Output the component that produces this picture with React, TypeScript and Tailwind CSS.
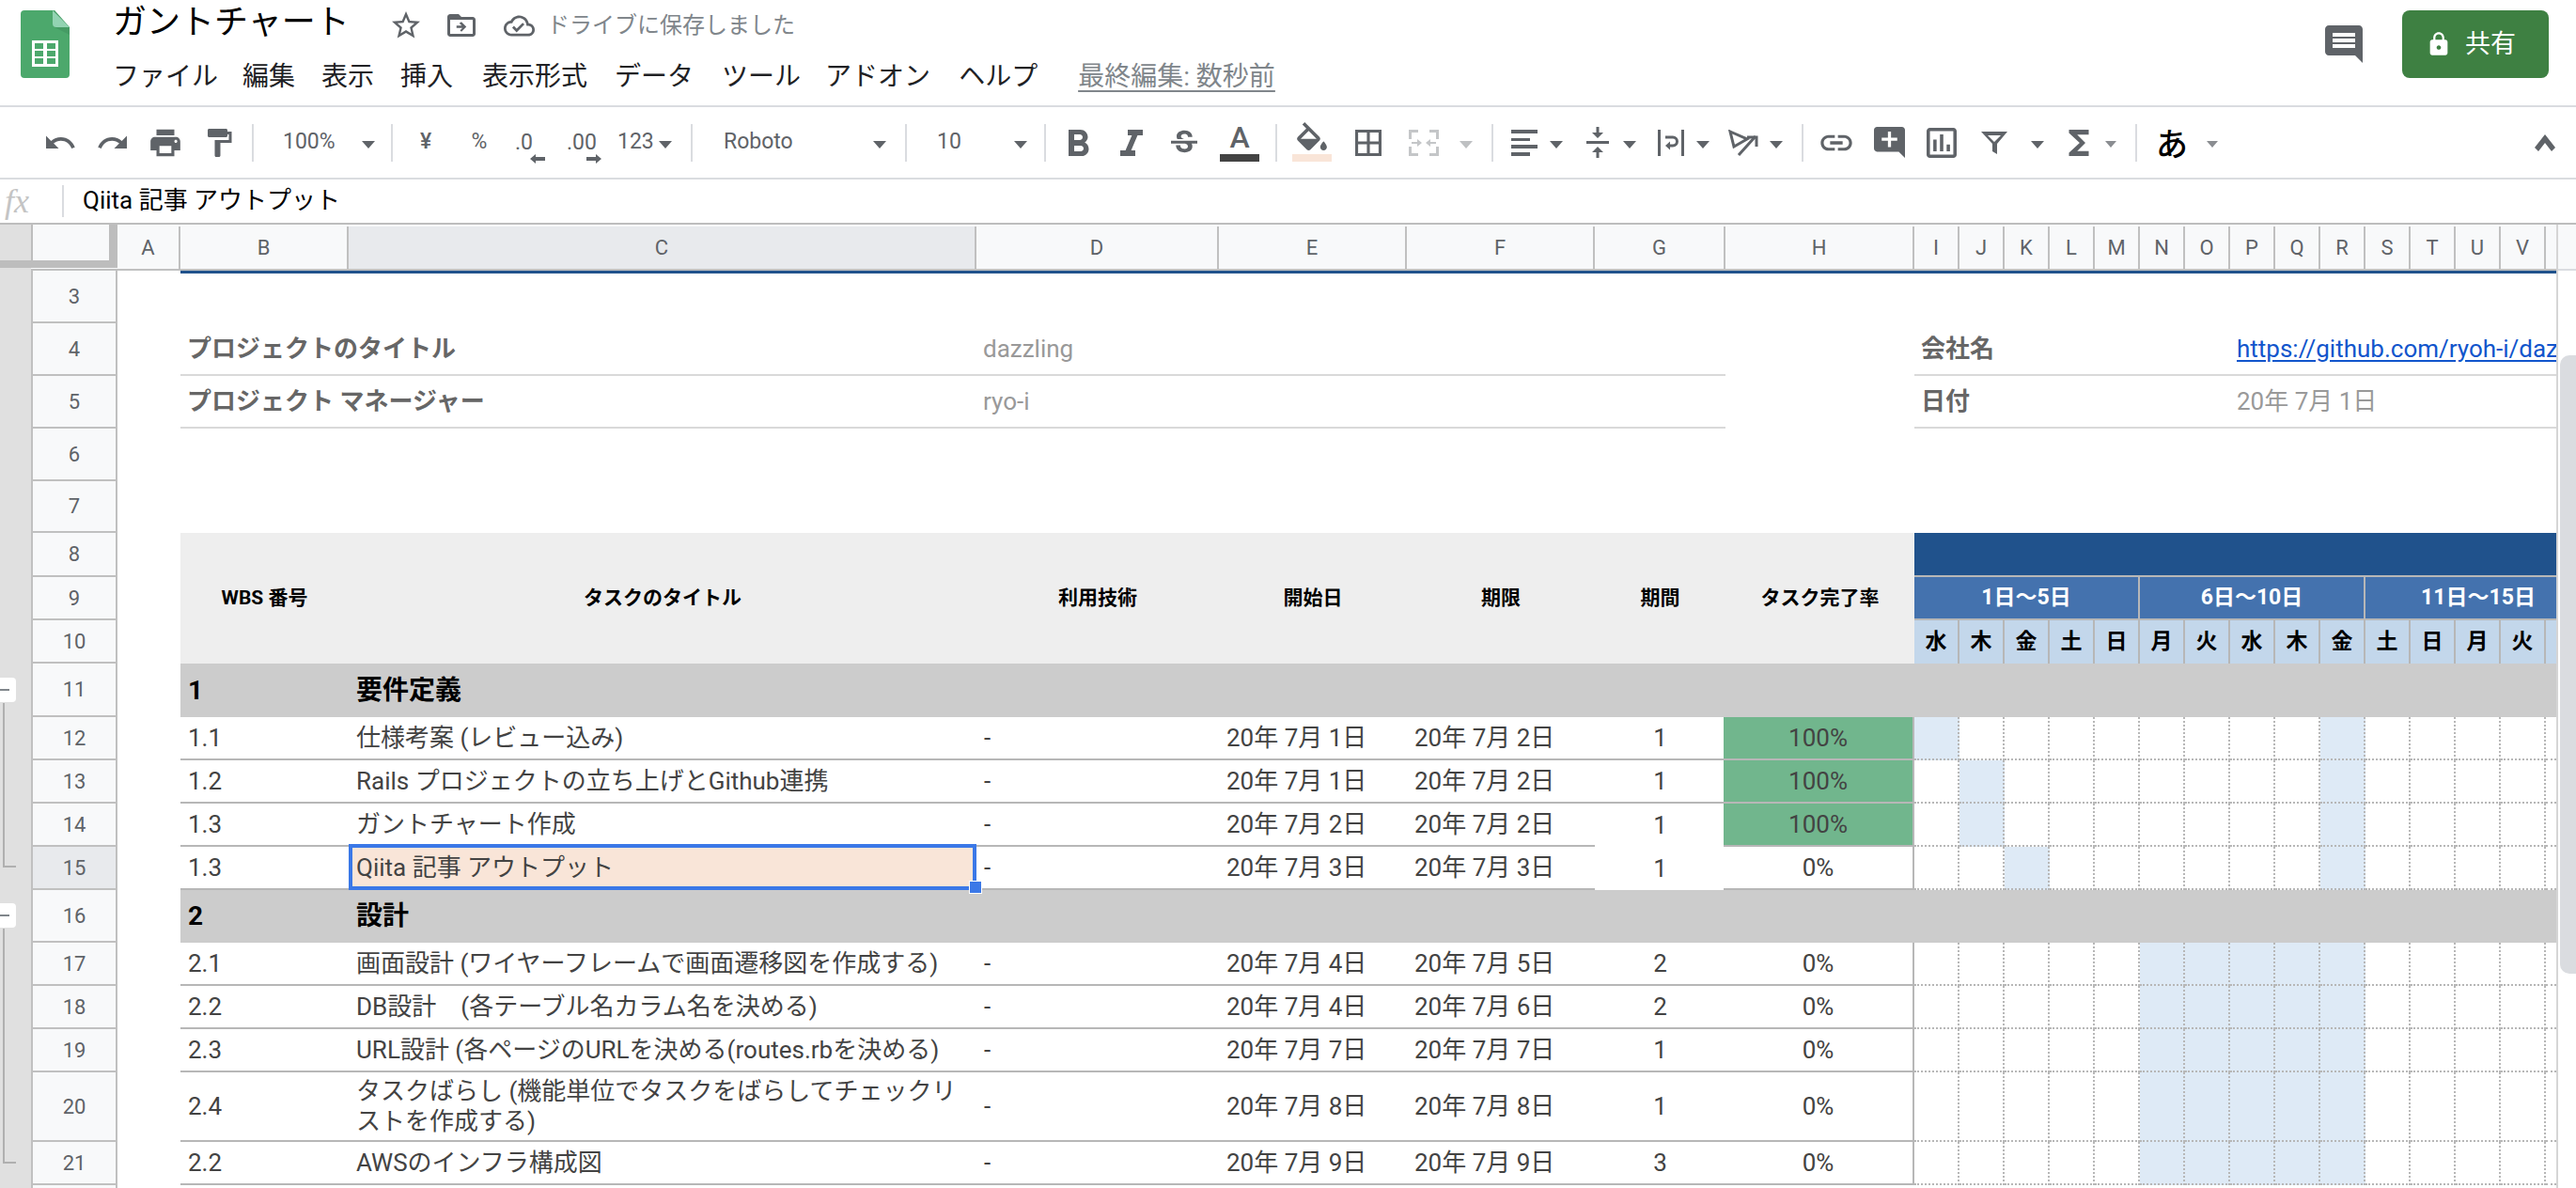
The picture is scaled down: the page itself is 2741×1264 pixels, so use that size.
import React from 'react';

// Column tracks: row header, A, B, C, D, E, F, G, H, I-V, partial W
const ROW = 'grid grid-cols-[92px_67px_179px_668px_258px_200px_200px_139px_201px_repeat(14,48px)_11px]';
const GREY = '#5f6368';

const COLUMNS = ['A', 'B', 'C', 'D', 'E', 'F', 'G', 'H', 'I', 'J', 'K', 'L', 'M', 'N', 'O', 'P', 'Q', 'R', 'S', 'T', 'U', 'V'];
const DAYS = ['水', '木', '金', '土', '日', '月', '火', '水', '木', '金', '土', '日', '月', '火'];

const MENU: [string, string][] = [
  ['ファイル', ''],
  ['編集', 'ml-[26px]'],
  ['表示', 'ml-[28px]'],
  ['挿入', 'ml-[28px]'],
  ['表示形式', 'ml-[31px]'],
  ['データ', 'ml-[29px]'],
  ['ツール', 'ml-[30px]'],
  ['アドオン', 'ml-[26px]'],
  ['ヘルプ', 'ml-[30px]'],
];

interface TaskRow {
  n: number;
  wbs: string;
  title: string;
  start: string;
  end: string;
  days: number;
  pct: string;
  fill: number[];
  tall?: boolean;
  noLine?: boolean;
  selected?: boolean;
}

const GROUP_ONE: TaskRow[] = [
  { n: 12, wbs: '1.1', title: '仕様考案 (レビュー込み)', start: '20年 7月 1日', end: '20年 7月 2日', days: 1, pct: '100%', fill: [0, 9] },
  { n: 13, wbs: '1.2', title: 'Rails プロジェクトの立ち上げとGithub連携', start: '20年 7月 1日', end: '20年 7月 2日', days: 1, pct: '100%', fill: [1, 9] },
  { n: 14, wbs: '1.3', title: 'ガントチャート作成', start: '20年 7月 2日', end: '20年 7月 2日', days: 1, pct: '100%', fill: [1, 9], noLine: true },
  { n: 15, wbs: '1.3', title: 'Qiita 記事 アウトプット', start: '20年 7月 3日', end: '20年 7月 3日', days: 1, pct: '0%', fill: [2, 9], noLine: true, selected: true },
];

const WEEK = [5, 6, 7, 8, 9];
const GROUP_TWO: TaskRow[] = [
  { n: 17, wbs: '2.1', title: '画面設計 (ワイヤーフレームで画面遷移図を作成する)', start: '20年 7月 4日', end: '20年 7月 5日', days: 2, pct: '0%', fill: WEEK },
  { n: 18, wbs: '2.2', title: 'DB設計　(各テーブル名カラム名を決める)', start: '20年 7月 4日', end: '20年 7月 6日', days: 2, pct: '0%', fill: WEEK },
  { n: 19, wbs: '2.3', title: 'URL設計 (各ページのURLを決める(routes.rbを決める)', start: '20年 7月 7日', end: '20年 7月 7日', days: 1, pct: '0%', fill: WEEK },
  { n: 20, wbs: '2.4', title: 'タスクばらし (機能単位でタスクをばらしてチェックリストを作成する)', start: '20年 7月 8日', end: '20年 7月 8日', days: 1, pct: '0%', fill: WEEK, tall: true },
  { n: 21, wbs: '2.2', title: 'AWSのインフラ構成図', start: '20年 7月 9日', end: '20年 7月 9日', days: 3, pct: '0%', fill: WEEK },
];

function Ico({ d, box = '0 0 24 24', className, color = GREY }: { d: string; box?: string; className: string; color?: string }) {
  return (
    <svg viewBox={box} className={`shrink-0 ${className}`} fill={color} fillRule="evenodd">
      <path d={d} />
    </svg>
  );
}

function Caret({ className = '', small = false }: { className?: string; small?: boolean }) {
  return (
    <svg viewBox="0 0 14 8" className={`shrink-0 mt-[4px] ${small ? 'w-[12px] h-[7px]' : 'w-[14px] h-[8px]'} ${className}`} fill={small ? '#8a8d91' : GREY}>
      <path d="M0 0h14L7 8z" />
    </svg>
  );
}

function Sep({ className }: { className: string }) {
  return <div className={`w-[2px] h-[40px] bg-[#dadce0] shrink-0 ${className}`} />;
}

function SheetsLogo() {
  return (
    <svg viewBox="0 0 52 72" className="w-[52px] h-[72px] ml-[22px] mt-[11px] shrink-0">
      <path d="M4 0h32l16 18v50a4 4 0 0 1-4 4H4a4 4 0 0 1-4-4V4a4 4 0 0 1 4-4z" fill="#4ca86c" />
      <path d="M36 0l16 18v8L36 18z" fill="#3f8f5e" opacity="0.55" />
      <path d="M34 0l18 18H38a4 4 0 0 1-4-4z" fill="#93d3b2" />
      <rect x="12" y="32" width="28" height="28" fill="#fff" />
      <path d="M15 35h9v6h-9zM28 35h9v6h-9zM15 43h9v6h-9zM28 43h9v6h-9zM15 51h9v6h-9zM28 51h9v6h-9z" fill="#4ca86c" />
    </svg>
  );
}

function TitleBar() {
  return (
    <div className="h-[114px] shrink-0 border-b-2 border-[#dadce0] flex items-start">
      <SheetsLogo />
      <div className="ml-[46px] flex flex-col">
        <div className="h-[54px] flex items-center">
          <div className="text-[36px] leading-[44px] text-black -mt-[6px] w-[252px] whitespace-nowrap">ガントチャート</div>
          <Ico
            className="w-[36px] h-[36px] ml-[42px]"
            d="M22 9.24l-7.19-.62L12 2 9.19 8.63 2 9.24l5.46 4.73L5.82 21 12 17.27 18.18 21l-1.63-7.03L22 9.24zM12 15.4l-3.76 2.27 1-4.28-3.32-2.88 4.38-.38L12 6.1l1.71 4.04 4.38.38-3.32 2.88 1 4.28L12 15.4z"
          />
          <Ico
            className="w-[36px] h-[36px] ml-[23px]"
            d="M20 6h-8l-2-2H4c-1.1 0-2 .9-2 2v12c0 1.1.9 2 2 2h16c1.1 0 2-.9 2-2V8c0-1.1-.9-2-2-2zm0 12H4V8h16v10zM12 9.5l3.5 3.5-3.5 3.5-1-1 1.7-1.7H8.5v-1.6h3.7l-1.7-1.7z"
          />
          <Ico
            className="w-[33px] h-[33px] ml-[27px]"
            d="M19.35 10.04C18.67 6.59 15.64 4 12 4 9.11 4 6.6 5.64 5.35 8.04 2.34 8.36 0 10.91 0 14c0 3.31 2.69 6 6 6h13c2.76 0 5-2.24 5-5 0-2.64-2.05-4.78-4.65-4.96zM19 18H6c-2.21 0-4-1.79-4-4 0-2.05 1.53-3.76 3.56-3.97l1.07-.11.5-.95C8.08 7.14 9.94 6 12 6c2.62 0 4.88 1.86 5.39 4.43l.3 1.5 1.53.11c1.56.1 2.78 1.41 2.78 2.96 0 1.65-1.35 3-3 3zm-9-3.82l-2.09-2.09L6.5 13.5 10 17l6.01-6.01-1.41-1.41z"
          />
          <span className="ml-[13px] text-[24px] text-[#80868b] whitespace-nowrap">ドライブに保存しました</span>
        </div>
        <div className="h-[44px] mt-[6px] flex items-center text-[28px] text-[#202124] whitespace-nowrap">
          {MENU.map(([label, gap]) => (
            <span key={label} className={gap}>
              {label}
            </span>
          ))}
          <span className="ml-[43px] text-[#80868b] underline underline-offset-[5px]">最終編集: 数秒前</span>
        </div>
      </div>
      <div className="ml-auto mr-[29px] flex items-start">
        <Ico
          className="w-[48px] h-[48px] mt-[23px]"
          d="M21.99 4c0-1.1-.89-2-1.99-2H4c-1.1 0-2 .9-2 2v12c0 1.1.9 2 2 2h14l4 4-.01-18zM18 14H6v-2h12v2zm0-3H6V9h12v2zm0-3H6V6h12v2z"
        />
        <button className="ml-[38px] mt-[11px] w-[156px] h-[72px] pr-[10px] rounded-[8px] bg-[#3e8042] text-white text-[27px] flex items-center justify-center gap-[14px]">
          <Ico
            className="w-[28px] h-[28px]"
            color="#fff"
            d="M18 8h-1V6c0-2.76-2.24-5-5-5S7 3.24 7 6v2H6c-1.1 0-2 .9-2 2v10c0 1.1.9 2 2 2h12c1.1 0 2-.9 2-2V10c0-1.1-.9-2-2-2zm-6 9c-1.1 0-2-.9-2-2s.9-2 2-2 2 .9 2 2-.9 2-2 2zm3.1-9H8.9V6c0-1.71 1.39-3.1 3.1-3.1 1.71 0 3.1 1.39 3.1 3.1v2z"
          />
          共有
        </button>
      </div>
    </div>
  );
}

function Toolbar() {
  return (
    <div className="h-[77px] shrink-0 border-b-2 border-[#dadce0] flex items-center pl-[46px] text-[23px] text-[#5f6368] whitespace-nowrap">
      <Ico className="w-[36px] h-[36px]" d="M12.5 8c-2.65 0-5.05.99-6.9 2.6L2 7v9h9l-3.62-3.62c1.39-1.16 3.16-1.88 5.12-1.88 3.54 0 6.55 2.31 7.6 5.5l2.37-.78C21.08 11.03 17.15 8 12.5 8z" />
      <Ico className="w-[36px] h-[36px] ml-[20px]" d="M18.4 10.6C16.55 8.99 14.15 8 11.5 8c-4.65 0-8.58 3.03-9.96 7.22L3.9 16c1.05-3.19 4.05-5.5 7.6-5.5 1.95 0 3.73.72 5.12 1.88L13 16h9V7l-3.6 3.6z" />
      <Ico className="w-[38px] h-[38px] ml-[19px]" d="M19 8H5c-1.66 0-3 1.34-3 3v6h4v4h12v-4h4v-6c0-1.66-1.34-3-3-3zm-3 11H8v-5h8v5zm3-7c-.55 0-1-.45-1-1s.45-1 1-1 1 .45 1 1-.45 1-1 1zm-1-9H6v4h12V3z" />
      <Ico className="w-[36px] h-[36px] ml-[20px]" d="M18 4V3c0-.55-.45-1-1-1H5c-.55 0-1 .45-1 1v4c0 .55.45 1 1 1h12c.55 0 1-.45 1-1V6h1v4H9v11c0 .55.45 1 1 1h2c.55 0 1-.45 1-1v-9h8V4h-3z" />
      <Sep className="ml-[17px]" />
      <span className="ml-[31px] w-[84px]">100%</span>
      <Caret />
      <Sep className="ml-[17px]" />
      <span className="ml-[15px] w-[40px] text-center font-medium">¥</span>
      <span className="ml-[17px] w-[40px] text-center">%</span>
      <div className="ml-[18px] w-[32px] mt-[10px] flex flex-col items-end">
        <span className="w-full h-[24px] leading-[24px]">.0</span>
        <Ico box="0 0 16 10" className="w-[16px] h-[10px]" d="M6 0v3h10v4H6v3L0 5z" />
      </div>
      <div className="ml-[23px] w-[37px] mt-[10px] flex flex-col items-end">
        <span className="w-full h-[24px] leading-[24px]">.00</span>
        <Ico box="0 0 16 10" className="w-[16px] h-[10px]" d="M10 0v3H0v4h10v3l6-5z" />
      </div>
      <span className="ml-[17px] w-[38px]">123</span>
      <Caret className="ml-[6px]" />
      <Sep className="ml-[20px]" />
      <span className="ml-[33px] w-[159px]">Roboto</span>
      <Caret />
      <Sep className="ml-[20px]" />
      <span className="ml-[32px] w-[82px]">10</span>
      <Caret />
      <Sep className="ml-[18px]" />
      <Ico box="7 4 11 14" className="w-[22px] h-[28px] ml-[24px]" d="M15.6 10.79c.97-.67 1.65-1.77 1.65-2.79 0-2.26-1.75-4-4-4H7v14h7.04c2.09 0 3.71-1.7 3.71-3.79 0-1.52-.86-2.82-2.15-3.42zM10 6.5h3c.83 0 1.5.67 1.5 1.5s-.67 1.5-1.5 1.5h-3v-3zm3.5 9H10v-3h3.5c.83 0 1.5.67 1.5 1.5s-.67 1.5-1.5 1.5z" />
      <Ico box="6 4 12 14" className="w-[24px] h-[28px] ml-[33px]" d="M10 4v3h2.21l-3.42 8H6v3h8v-3h-2.21l3.42-8H18V4z" />
      <Ico box="3 3 18 17" className="w-[28px] h-[28px] ml-[30px]" d="M6.85 7.08C6.85 4.37 9.45 3 12.24 3c1.64 0 3 .49 3.9 1.28.77.65 1.46 1.73 1.46 3.24h-3.01c0-.31-.05-.59-.15-.85-.29-.86-1.2-1.28-2.25-1.28-1.86 0-2.34 1.02-2.34 1.7 0 .48.25.88.74 1.21.38.25.77.48 1.41.7H7.39c-.21-.34-.54-.89-.54-1.92zM21 12v-2H3v2h9.62c1.15.45 1.96.75 1.96 1.97 0 1-.81 1.67-2.28 1.67-1.54 0-2.93-.54-2.93-2.51H6.4c0 .55.08 1.13.24 1.58.81 2.29 3.29 3.3 5.67 3.3 2.27 0 5.3-.89 5.3-4.05 0-.3-.01-1.16-.48-1.94H21V12z" />
      <div className="ml-[24px] w-[42px] flex flex-col items-center -mt-[2px]">
        <span className="text-[32px] leading-[32px] font-medium">A</span>
        <div className="w-full h-[8px] mt-[2px] bg-[#434343]" />
      </div>
      <Sep className="ml-[17px]" />
      <div className="ml-[16px] w-[42px] flex flex-col items-center -mt-[2px]">
        <Ico box="2.5 0 19 17" className="w-[34px] h-[30px]" d="M16.56 8.94L7.62 0 6.21 1.41l2.38 2.38-5.15 5.15c-.59.59-.59 1.54 0 2.12l5.5 5.5c.29.29.68.44 1.06.44s.77-.15 1.06-.44l5.5-5.5c.59-.58.59-1.53 0-2.12zM5.21 10L10 5.21 14.79 10H5.21zM19 11.5s-2 2.17-2 3.5c0 1.1.9 2 2 2s2-.9 2-2c0-1.33-2-3.5-2-3.5z" />
        <div className="w-full h-[8px] mt-[4px] bg-[#f9e5d8]" />
      </div>
      <Ico box="3 3 18 18" className="w-[28px] h-[28px] ml-[25px]" d="M3 3v18h18V3H3zm8 16H5v-6h6v6zm0-8H5V5h6v6zm8 8h-6v-6h6v6zm0-8h-6V5h6v6z" />
      <Ico
        box="0 0 32 28"
        color="#c4c6c8"
        className="w-[32px] h-[28px] ml-[29px]"
        d="M0 0h10v3H3v7H0zM32 0H22v3h7v7h3zM0 28h10v-3H3v-7H0zM32 28H22v-3h7v-7h3zM3 13h6v-3l5 4-5 4v-3H3zM29 13h-6v-3l-5 4 5 4v-3h6z"
      />
      <Caret className="ml-[22px] opacity-40" />
      <Sep className="ml-[20px]" />
      <Ico box="0 0 28 28" className="w-[28px] h-[28px] ml-[19px]" d="M0 0h28v4H0zM0 9h20v3H0zM0 16h28v4H0zM0 24h20v4H0z" />
      <Caret className="ml-[13px]" />
      <Ico box="4 1 16 22" className="w-[24px] h-[33px] ml-[25px]" d="M8 19h3v4h2v-4h3l-4-4-4 4zm8-14h-3V1h-2v4H8l4 4 4-4zM4 11v2h16v-2H4z" />
      <Caret className="ml-[15px]" />
      <svg viewBox="0 0 28 28" className="w-[28px] h-[28px] ml-[23px] shrink-0" fill="none" stroke={GREY} strokeWidth="3">
        <path d="M1.5 0v28M26.5 0v28M8 8h8a4.5 4.5 0 0 1 0 9h-5" />
        <path d="M13 12.5l-5 4.5 5 4.5z" fill={GREY} stroke="none" />
      </svg>
      <Caret className="ml-[13px]" />
      <svg viewBox="0 0 32 28" className="w-[32px] h-[28px] ml-[20px] shrink-0" fill="none" stroke={GREY} strokeWidth="3">
        <path d="M2 2l18 8-14 8zM11 27L29 7" />
        <path d="M20 8h10v10" />
      </svg>
      <Caret className="ml-[12px]" />
      <Sep className="ml-[20px]" />
      <Ico className="w-[40px] h-[40px] ml-[15px]" d="M3.9 12c0-1.71 1.39-3.1 3.1-3.1h4V7H7c-2.76 0-5 2.24-5 5s2.24 5 5 5h4v-1.9H7c-1.71 0-3.1-1.39-3.1-3.1zM8 13h8v-2H8v2zm9-6h-4v1.9h4c1.71 0 3.1 1.39 3.1 3.1s-1.39 3.1-3.1 3.1h-4V17h4c2.76 0 5-2.24 5-5s-2.24-5-5-5z" />
      <Ico box="2 2 20 20" className="w-[33px] h-[33px] ml-[20px]" d="M22 4c0-1.1-.9-2-2-2H4c-1.1 0-2 .9-2 2v12c0 1.1.9 2 2 2h14l4 4V4zM17 11h-4v4h-2v-4H7V9h4V5h2v4h4v2z" />
      <Ico box="3 3 18 18" className="w-[32px] h-[32px] ml-[23px]" d="M9 17H7v-7h2v7zm4 0h-2V7h2v10zm4 0h-2v-4h2v4zm2 2H5V5h14v14zM19 3H5c-1.1 0-2 .9-2 2v14c0 1.1.9 2 2 2h14c1.1 0 2-.9 2-2V5c0-1.1-.9-2-2-2z" />
      <Ico box="0 0 28 24" className="w-[28px] h-[24px] ml-[26px]" d="M0 0h28L17 13v11l-5-3v-8L0 0zM7 4l7 7 7-7H7z" />
      <Caret className="ml-[25px]" />
      <Ico box="6 4 12 16" className="w-[22px] h-[28px] ml-[26px]" d="M18 4H6v2l6.5 6L6 18v2h12v-3h-7l5-5-5-5h7z" />
      <Caret small className="ml-[17px]" />
      <Sep className="ml-[20px]" />
      <span className="ml-[20px] w-[36px] text-[34px] leading-[40px] font-medium text-black mt-[4px]">あ</span>
      <Caret small className="ml-[18px]" />
      <Ico box="0 0 22 18" className="w-[22px] h-[18px] ml-auto mr-[22px]" d="M11 0l11 14-4 4-7-9-7 9-4-4z" />
    </div>
  );
}

function FormulaBar() {
  return (
    <div className="h-[48px] shrink-0 border-b-2 border-[#bdbdbd] flex items-center">
      <span className="ml-[5px] w-[60px] font-['Liberation_Serif',serif] italic text-[36px] leading-[40px] text-[#c4c4c4]">fx</span>
      <div className="ml-[1px] w-[2px] h-[34px] bg-[#dadce0]" />
      <span className="ml-[20px] -mt-[2px] text-[26px] text-black whitespace-nowrap">Qiita 記事 アウトプット</span>
    </div>
  );
}

function Gutter() {
  return (
    <div className="relative w-[33px] shrink-0 bg-[#e0e0e0]">
      <div className="h-[38px]" />
      <div className="h-[8px] bg-[#bdbdbd]" />
      {/* row groups */}
      <div className="absolute left-0 top-[482px] w-[17px] h-[26px] bg-white rounded-r-[4px] flex items-center">
        <div className="w-[10px] h-[2px] bg-[#80868b]" />
      </div>
      <div className="absolute left-[3px] top-[509px] w-[14px] h-[175px] border-l-2 border-b-2 border-[#b0b0b0]" />
      <div className="absolute left-0 top-[722px] w-[17px] h-[26px] bg-white rounded-r-[4px] flex items-center">
        <div className="w-[10px] h-[2px] bg-[#80868b]" />
      </div>
      <div className="absolute left-[3px] top-[749px] w-[14px] h-[250px] border-l-2 border-b-2 border-[#b0b0b0]" />
    </div>
  );
}

function RowHead({ n, active = false }: { n: number; active?: boolean }) {
  return (
    <div className={`border-x-2 border-b-2 border-[#c0c0c0] flex items-center justify-center text-[22px] text-[#5f6368] ${active ? 'bg-[#e8eaed]' : 'bg-[#f8f9fa]'}`}>
      {n}
    </div>
  );
}

function ColumnHeader() {
  return (
    <div className={`${ROW} h-[49px] border-b-2 border-[#c0c0c0] bg-[#f8f9fa] text-[22px] text-[#5f6368]`}>
      <div className="h-[46px] border-b-[8px] border-r-[9px] border-l-2 border-[#bdbdbd]" />
      {COLUMNS.map((c) => (
        <div key={c} className={`mt-[2px] border-r-2 border-[#c0c0c0] flex items-center justify-center ${c === 'C' ? 'bg-[#e8eaed]' : ''}`}>
          {c}
        </div>
      ))}
      <div className="mt-[2px]" />
    </div>
  );
}

function InfoRow({ n, label, value, sideLabel, sideValue }: { n: number; label: string; value: string; sideLabel: string; sideValue: React.ReactNode }) {
  const line = 'border-b-2 border-[#d9d9d9] flex items-center px-[7px] overflow-hidden whitespace-nowrap';
  return (
    <div className={`${ROW} h-[56px]`}>
      <RowHead n={n} />
      <div />
      <div className={`col-span-2 ${line} text-[26px] font-bold text-[#666666]`}>{label}</div>
      <div className={`col-span-4 ${line} text-[26px] text-[#999999]`}>{value}</div>
      <div />
      <div className={`col-span-7 ${line} text-[26px] font-bold text-[#666666]`}>{sideLabel}</div>
      <div className={`col-span-8 ${line} pr-0 text-[26px]`}>{sideValue}</div>
    </div>
  );
}

function BlankRow({ n, className }: { n: number; className: string }) {
  return (
    <div className={`${ROW} ${className}`}>
      <RowHead n={n} />
    </div>
  );
}

function TableHeader() {
  const th = 'bg-[#eeeeee] flex items-center justify-center text-[21px] font-bold text-black whitespace-nowrap';
  return (
    <>
      <div className={`${ROW} h-[47px]`}>
        <RowHead n={8} />
        <div />
        <div className="col-span-7 bg-[#eeeeee]" />
        <div className="col-span-15 bg-[#20528c] border-b-2 border-[#b7b7b7]" />
      </div>
      <div className={`${ROW} h-[46px]`}>
        <RowHead n={9} />
        <div />
        <div className={th}>WBS 番号</div>
        <div className={th}>タスクのタイトル</div>
        <div className={th}>利用技術</div>
        <div className={th}>開始日</div>
        <div className={th}>期限</div>
        <div className={th}>期間</div>
        <div className={th}>タスク完了率</div>
        <div className="col-span-5 bg-[#4472ae] border-r-2 border-b-2 border-[#b7b7b7] flex items-center justify-center text-[23px] font-bold text-white">1日〜5日</div>
        <div className="col-span-5 bg-[#4472ae] border-r-2 border-b-2 border-[#b7b7b7] flex items-center justify-center text-[23px] font-bold text-white">6日〜10日</div>
        <div className="col-span-5 bg-[#4472ae] border-b-2 border-[#b7b7b7] overflow-hidden text-[23px] font-bold text-white">
          <div className="w-[240px] h-full flex items-center justify-center">11日〜15日</div>
        </div>
      </div>
      <div className={`${ROW} h-[46px]`}>
        <RowHead n={10} />
        <div />
        <div className="col-span-7 bg-[#eeeeee]" />
        {DAYS.map((d, i) => (
          <div key={i} className="bg-[#c3d7eb] border-r-2 border-[#b7b7b7] flex items-center justify-center text-[23px] font-bold text-black">
            {d}
          </div>
        ))}
        <div className="bg-[#c3d7eb]" />
      </div>
    </>
  );
}

function SectionRow({ n, no, title, className }: { n: number; no: string; title: string; className: string }) {
  return (
    <div className={`${ROW} ${className}`}>
      <RowHead n={n} />
      <div />
      <div className="bg-[#cccccc] flex items-center px-[8px] text-[28px] font-bold text-black">{no}</div>
      <div className="col-span-21 bg-[#cccccc] flex items-center px-[8px] text-[28px] font-bold text-black">{title}</div>
    </div>
  );
}

function Task({ row }: { row: TaskRow }) {
  const cell = 'border-b-2 border-[#b7b7b7] flex items-center px-[8px] whitespace-nowrap';
  return (
    <div className={`${ROW} ${row.tall ? 'h-[74px]' : 'h-[46px]'} text-[26px] text-[#434343]`}>
      <RowHead n={row.n} active={row.selected} />
      <div />
      <div className={cell}>{row.wbs}</div>
      {row.selected ? (
        <div className={`${cell} relative`}>
          <div className="absolute left-0 right-0 -top-[3px] -bottom-[2px] bg-[#f9e5d8] border-[4px] border-[#3b78e7]" />
          <span className="relative">{row.title}</span>
          <div className="absolute -right-[6px] -bottom-[6px] w-[14px] h-[14px] bg-[#3b78e7] border border-white" />
        </div>
      ) : (
        <div className={`border-b-2 border-[#b7b7b7] flex items-center px-[8px] leading-[32px] ${row.tall ? 'pr-[12px]' : 'whitespace-nowrap'}`}>{row.title}</div>
      )}
      <div className={cell}>-</div>
      <div className={cell}>{row.start}</div>
      <div className={cell}>{row.end}</div>
      <div className={`${row.noLine ? '' : 'border-b-2 border-[#b7b7b7]'} flex items-center justify-center`}>{row.days}</div>
      <div className={`-ml-[2px] border-b-2 border-r-2 border-[#b7b7b7] flex items-center justify-center ${row.pct === '100%' ? 'bg-[#71b68d]' : ''}`}>{row.pct}</div>
      {DAYS.map((_, i) => (
        <div key={i} className={`border-r-2 border-b-2 border-dotted border-[#b7b7b7] ${row.fill.includes(i) ? 'bg-[#deeaf6]' : ''}`} />
      ))}
      <div className="border-b-2 border-dotted border-[#b7b7b7]" />
    </div>
  );
}

export default function App() {
  return (
    <div className="w-[2741px] h-screen overflow-hidden bg-white flex flex-col font-['Roboto','Noto_Sans_CJK_JP',sans-serif]">
      <TitleBar />
      <Toolbar />
      <FormulaBar />
      <div className="flex-1 min-h-0 flex overflow-hidden">
        <Gutter />
        <div className="w-[2687px] shrink-0">
          <ColumnHeader />
          <div className={`${ROW} h-[56px]`}>
            <RowHead n={3} />
            <div />
            <div className="col-span-22 border-t-[3px] border-[#20528c]" />
          </div>
          <InfoRow
            n={4}
            label="プロジェクトのタイトル"
            value="dazzling"
            sideLabel="会社名"
            sideValue={<span className="text-[#1155cc] underline underline-offset-[3px]">https://github.com/ryoh-i/dazzling</span>}
          />
          <InfoRow n={5} label="プロジェクト マネージャー" value="ryo-i" sideLabel="日付" sideValue={<span className="text-[#999999]">20年 7月 1日</span>} />
          <BlankRow n={6} className="h-[56px]" />
          <BlankRow n={7} className="h-[55px]" />
          <TableHeader />
          <SectionRow n={11} no="1" title="要件定義" className="h-[57px]" />
          {GROUP_ONE.map((row) => (
            <Task key={row.n} row={row} />
          ))}
          <SectionRow n={16} no="2" title="設計" className="h-[56px]" />
          {GROUP_TWO.map((row) => (
            <Task key={row.n} row={row} />
          ))}
          <BlankRow n={22} className="h-[46px]" />
        </div>
        <div className="flex-1 border-l-2 border-[#d5d5d5] flex flex-col">
          <div className="h-[49px] bg-[#f8f9fa] border-b-2 border-[#dadce0]" />
          <div className="mt-[90px] ml-[2px] h-[658px] rounded-l-[10px] bg-[#dadce0]" />
        </div>
      </div>
    </div>
  );
}
